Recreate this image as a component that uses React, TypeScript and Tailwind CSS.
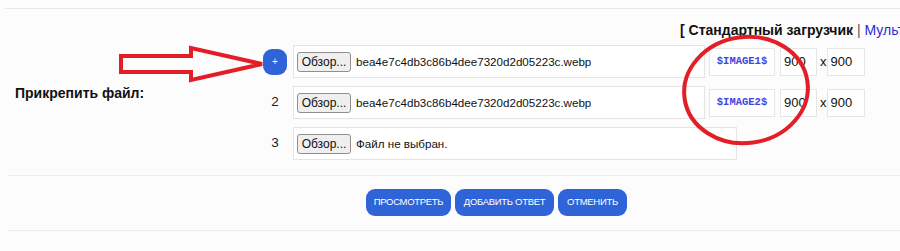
import React from 'react';

const rows = [
  { n: '+', file: 'bea4e7c4db3c86b4dee7320d2d05223c.webp', tag: '$IMAGE1$' },
  { n: '2', file: 'bea4e7c4db3c86b4dee7320d2d05223c.webp', tag: '$IMAGE2$' },
  { n: '3', file: '', tag: '' },
];

function FileRow({ n, file, tag }: { n: string; file: string; tag: string }) {
  return (
    <div className="flex h-[33px] items-center">
      <div className="flex w-[24px] justify-center">
        {n === '+' ? (
          <button className="flex h-[26px] w-[25px] items-center justify-center rounded-[9px] bg-[#2f63d8] text-[10px] text-white">
            +
          </button>
        ) : (
          <span className="text-[13.5px] text-[#222]">{n}</span>
        )}
      </div>
      <div
        className={`ml-[6px] flex h-full items-center border border-[#e4e4e4] bg-white pl-[3px] ${
          tag ? 'w-[412px]' : 'w-[444px]'
        }`}
      >
        <span className="flex h-[20px] w-[54px] items-center justify-center rounded-[3px] border border-[#8f8f8f] bg-[#efefef] text-[12px] text-[#111]">
          Обзор...
        </span>
        <span className="ml-[5px] text-[11.6px] text-[#111]">{file || 'Файл не выбран.'}</span>
      </div>
      {tag && (
        <div className="flex items-center">
          <div className="ml-[4px] flex h-[28px] w-[66px] items-center justify-center border border-[#e6e6e6] bg-white font-['Liberation_Mono',monospace] text-[10.5px] font-bold text-[#4444e0]">
            {tag}
          </div>
          <div className="ml-[5px] flex h-[28px] w-[37px] items-center border border-[#e6e6e6] bg-white pl-[3px] text-[13px] text-[#111]">
            900
          </div>
          <span className="ml-[3px] text-[13px] text-[#111]">x</span>
          <div className="flex h-[28px] w-[38px] items-center border border-[#e6e6e6] bg-white pl-[3px] text-[13px] text-[#111]">
            900
          </div>
        </div>
      )}
    </div>
  );
}

export default function App() {
  return (
    <div className="relative h-[251px] w-[900px] overflow-hidden bg-[#fcfcfd] font-['Liberation_Sans',Arial,sans-serif]">
      <div className="ml-[5px] mt-[8px] border-t border-[#e8e8ea]" />

      <div className="whitespace-nowrap pl-[680px] pt-[13px] text-[14px] font-bold leading-[16px] text-[#111]">
        [ Стандартный загрузчик <span className="font-normal text-[#555]">|</span>{' '}
        <span className="font-normal text-[#2b2bd6]">Мультизагрузчик</span> ]
      </div>

      <div className="mt-[7px] flex">
        <div className="w-[263px] pl-[15px] pt-[40px] text-[14px] font-bold leading-[16px] text-[#111]">
          Прикрепить файл:
        </div>
        <div className="flex flex-col gap-[8px]">
          {rows.map((r, i) => (
            <FileRow key={i} {...r} />
          ))}
        </div>
      </div>

      <div className="ml-[8px] mt-[15px] border-t border-[#ececee]" />

      <div className="flex gap-[4px] pl-[366px] pt-[13px]">
        {[
          ['ПРОСМОТРЕТЬ', 'w-[85px]'],
          ['ДОБАВИТЬ ОТВЕТ', 'w-[99px]'],
          ['ОТМЕНИТЬ', 'w-[69px]'],
        ].map(([label, w]) => (
          <button
            key={label}
            className={`flex h-[27px] ${w} items-center justify-center rounded-[9px] bg-[#2f63d8] text-[9.5px] tracking-[-0.3px] text-white`}
          >
            {label}
          </button>
        ))}
      </div>

      <div className="ml-[8px] mt-[14px] border-t border-[#ececee]" />

      {/* red annotations drawn over the form */}
      <svg className="pointer-events-none absolute left-0 top-0" width="900" height="251">
        <polygon
          points="121,56 191,56 191,48 262,64 191,80 191,72 121,72"
          fill="none"
          stroke="#e31e26"
          strokeWidth="4"
          strokeLinejoin="miter"
        />
        <ellipse
          cx="746"
          cy="90"
          rx="62"
          ry="53"
          fill="none"
          stroke="#e31e26"
          strokeWidth="4"
          transform="rotate(-8 746 90)"
        />
      </svg>
    </div>
  );
}
